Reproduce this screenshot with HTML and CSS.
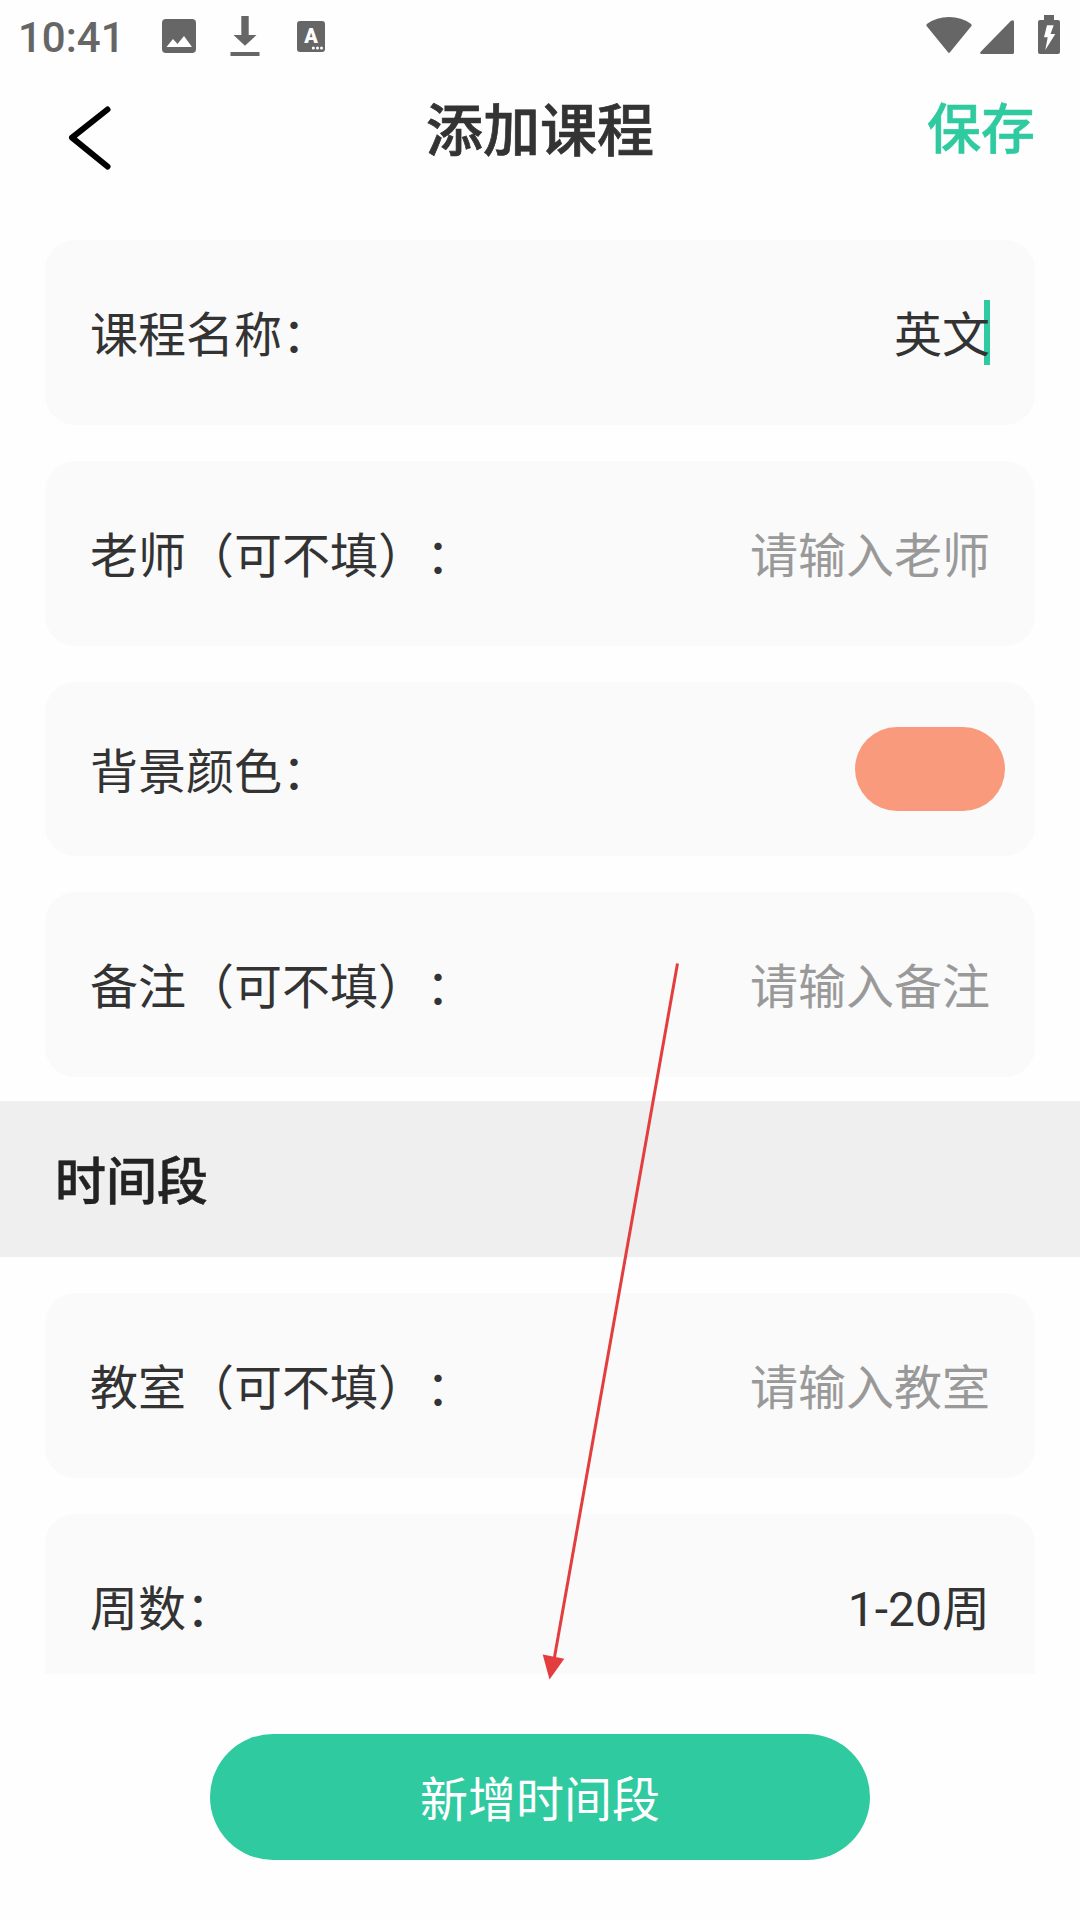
FILE: index.html
```html
<!DOCTYPE html>
<html lang="zh-CN">
<head>
    <meta charset="UTF-8">
    <meta name="viewport" content="width=device-width, initial-scale=1.0">
    <title>添加课程</title>
    <link rel="stylesheet" href="styles.css">
</head>
<body>
    <div class="statusbar">
        <span class="time">10:41</span>
        <svg class="ico_image" width="34" height="34" viewBox="0 0 34 34">
            <rect width="34" height="34" rx="4" fill="#666"/>
            <path d="M4.500 28 L11 20 L15.500 25 L22 17 L30 28 Z" fill="#fff"/>
        </svg>
        <svg class="ico_download" width="30" height="40" viewBox="0 0 30 40">
            <path d="M11.300 0 H18.700 V19 H26.500 L15 29.700 L3.500 19 H11.300 Z M0.500 36 H29.500 V40 H0.500 Z" fill="#666"/>
        </svg>
        <svg class="ico_lang" width="28" height="31" viewBox="0 0 28 31">
            <rect width="28" height="31" rx="3" fill="#666"/>
            <text class="lang_text" x="14" y="22">A</text>
            <circle cx="16.300" cy="27" r="1.500" fill="#fff"/>
            <circle cx="20.500" cy="27" r="1.500" fill="#fff"/>
            <circle cx="24.500" cy="27" r="1.500" fill="#fff"/>
        </svg>
        <div class="status_right">
            <svg width="46" height="37" viewBox="0 0 46 37">
                <path d="M0.800 9.300 Q-0.300 8 1.200 6.800 Q10.500 0 23 0 Q35.500 0 44.800 6.800 Q46.300 8 45.200 9.300 L24 35.300 Q23 36.500 22 35.300 Z" fill="#666"/>
            </svg>
            <svg class="ico_signal" width="34" height="34" viewBox="0 0 34 34">
                <path d="M34 1.500 V32.500 Q34 34 32.500 34 H1.500 Q-0.700 33.500 0.700 31.700 L31 0.800 Q33.500 -0.800 34 1.500 Z" fill="#666"/>
            </svg>
            <svg class="ico_battery" width="22" height="39" viewBox="0 0 22 39">
                <path d="M6 0 H16 V5 H20 Q22 5 22 7 V37 Q22 39 20 39 H2 Q0 39 0 37 V7 Q0 5 2 5 H6 Z" fill="#666"/>
                <path d="M9 10.300 H15.700 L12.500 19 H17.300 L7.300 35 L9.700 22.300 H6 Z" fill="#fff"/>
            </svg>
        </div>
    </div>

    <div class="header">
        <svg class="back" width="44" height="64" viewBox="0 0 44 64">
            <path d="M39.500 3.500 L4 31.700 L39.500 60.500" fill="none" stroke="#000" stroke-width="6" stroke-linecap="round" stroke-linejoin="round"/>
        </svg>
        <h1 class="title">添加课程</h1>
        <span class="save">保存</span>
    </div>

    <div class="form">
        <div class="row">
            <span class="label">课程名称：</span>
            <span class="value name_value">英文</span>
        </div>
        <div class="row">
            <span class="label">老师（可不填）：</span>
            <span class="value hint">请输入老师</span>
        </div>
        <div class="row row_color">
            <span class="label">背景颜色：</span>
            <span class="color"></span>
        </div>
        <div class="row">
            <span class="label">备注（可不填）：</span>
            <span class="value hint">请输入备注</span>
        </div>
        <h2 class="section">时间段</h2>
        <div class="row">
            <span class="label">教室（可不填）：</span>
            <span class="value hint">请输入教室</span>
        </div>
        <div class="row">
            <span class="label">周数：</span>
            <span class="value">1-20周</span>
        </div>
    </div>

    <div class="footer">
        <button class="add">新增时间段</button>
    </div>

    <!-- 指向按钮的箭头 -->
    <svg class="arrow" width="160" height="730" viewBox="0 0 160 730">
        <path d="M137.500 3.500 L14 700" stroke="#e43d3d" stroke-width="3" fill="none"/>
        <path d="M2.700 694.500 L24.300 698.700 L9.500 719.500 Z" fill="#e43d3d"/>
    </svg>
</body>
</html>
```

FILE: styles.css
```css
*{
    box-sizing: border-box;
}

body{
    position: relative;
    margin: 0;
    height: 1920px;
    display: flex;
    flex-direction: column;
    overflow: hidden;
    background-color: #fefefe;
    color: #333;
    font-family: Roboto, "Noto Sans CJK SC", sans-serif;
    font-size: 48px;
    text-spacing-trim: space-all;
}

/* 状态栏 */
.statusbar{
    height: 72px;
    display: flex;
    align-items: flex-start;
    padding: 15px 20px 0 18px;
}
.time{
    width: 144px;
    padding-top: 1px;
    color: #666;
    font-size: 42px;
    font-weight: 500;
    line-height: 44px;
}
.ico_image{
    margin-top: 4px;
}
.ico_download{
    margin: 1px 0 0 34px;
}
.ico_lang{
    margin: 6px 0 0 37px;
}
.lang_text{
    fill: #fff;
    font-size: 20px;
    font-weight: 900;
    text-anchor: middle;
}
.status_right{
    margin-left: auto;
    display: flex;
    padding-top: 2px;
}
.ico_signal{
    margin: 3px 0 0 8px;
}
.ico_battery{
    margin: -2px 0 0 24px;
}

/* 标题 */
.header{
    height: 168px;
    display: grid;
    grid-template-columns: 1fr auto 1fr;
    align-items: start;
    padding: 0 45px;
}
.back{
    margin: 34px 0 0 23px;
}
.title{
    margin: 27px 0 0;
    font-size: 57px;
    font-weight: 500;
    line-height: 66px;
    -webkit-text-stroke: 0.7px #333;
}
.save{
    margin-top: 26px;
    justify-self: end;
    color: #2fca9f;
    font-size: 54px;
    font-weight: 500;
    line-height: 66px;
    -webkit-text-stroke: 0.5px #2fca9f;
}

/* 表单 */
.form{
    height: 1434px;
    overflow: hidden;
}
.row{
    height: 185px;
    margin: 0 45px 36px;
    padding: 0 45px;
    display: flex;
    align-items: center;
    justify-content: space-between;
    background-color: #fafafa;
    border-radius: 30px;
    line-height: 65px;
}
.row_color{
    height: 174px;
    padding-right: 30px;
}
.label,
.value{
    padding-top: 6px;
}
.hint{
    color: #999;
}
.name_value{
    position: relative;
    z-index: 0;
}
.name_value::after{
    content: "";
    position: absolute;
    z-index: -1;
    right: 0;
    top: 3px;
    width: 6px;
    height: 65px;
    background-color: #2fca9f;
}
.color{
    width: 150px;
    height: 84px;
    border-radius: 42px;
    background-color: #f99a7c;
}
.section{
    height: 156px;
    margin: -12px 0 36px;
    padding: 4px 0 0 55px;
    background-color: #efefef;
    color: #222;
    font-size: 51px;
    font-weight: 500;
    line-height: 156px;
    -webkit-text-stroke: 0.5px #222;
}

/* 底部按钮 */
.footer{
    padding-top: 60px;
    text-align: center;
}
.add{
    display: block;
    width: 660px;
    height: 126px;
    margin: 0 auto;
    padding: 0 0 3px;
    border: none;
    border-radius: 63px;
    background-color: #2fca9f;
    color: #fff;
    font: inherit;
}

.arrow{
    position: absolute;
    left: 540px;
    top: 960px;
}
```
